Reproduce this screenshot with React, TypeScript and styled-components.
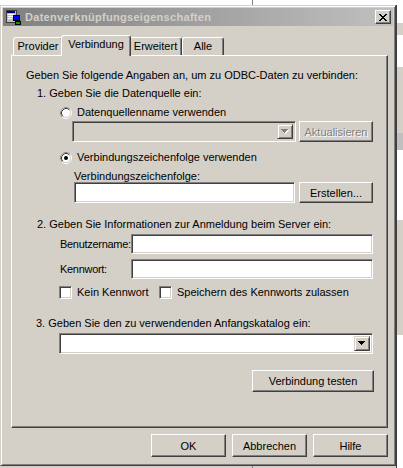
import React from 'react';
import styled, { createGlobalStyle } from 'styled-components';

const face = '#d4d0c8';
const shadow = '#808080';
const dark = '#404040';

const GlobalStyle = createGlobalStyle`
  html, body { margin: 0; padding: 0; }
  body {
    width: 403px;
    height: 468px;
    overflow: hidden;
    background: ${face};
    font-family: "Liberation Sans", Arial, sans-serif;
    font-size: 11px;
    color: #000;
  }
`;

const Desktop = styled.div`
  width: 403px;
  height: 468px;
  box-sizing: border-box;
  display: flex;
  align-items: flex-start;
  padding-top: 5px;
  background: linear-gradient(to right, transparent 252px, #808080 252px 253px, transparent 253px),
    linear-gradient(#fff 0 5px, ${face} 5px);
`;

// strip of the application window behind the dialog
const BackStrip = styled.div`
  flex: 1;
  height: 463px;
  box-sizing: border-box;
  border-left: 1px solid ${dark};
  background: linear-gradient(
    #fff 0 18px,
    ${face} 18px 30px,
    #fff 30px 62px,
    ${face} 62px 128px,
    #c0c0c0 128px 145px,
    #fff 145px 215px,
    ${face} 215px 330px,
    #fff 330px
  );
`;

const Window = styled.div`
  width: 396px;
  height: 461px;
  flex: none;
  box-sizing: border-box;
  border: 1px solid;
  border-color: ${face} ${dark} ${dark} ${face};
  box-shadow: inset 1px 1px #fff, inset -1px -1px ${shadow};
  padding: 2px;
  background: ${face};
  display: flex;
  flex-direction: column;
`;

const TitleBar = styled.div`
  height: 18px;
  flex: none;
  display: flex;
  align-items: center;
  padding: 0 2px;
  background: linear-gradient(to right, #808080, #c0c0c0);
`;

const TitleText = styled.span`
  margin-left: 4px;
  font-weight: bold;
  font-size: 11px;
  letter-spacing: 0.3px;
  color: ${face};
  white-space: nowrap;
`;

const CloseButton = styled.div`
  margin-left: auto;
  width: 16px;
  height: 14px;
  box-sizing: border-box;
  border: 1px solid;
  border-color: #fff ${dark} ${dark} #fff;
  box-shadow: inset -1px -1px ${shadow};
  background: ${face};
  display: flex;
  align-items: center;
  justify-content: center;
  padding-right: 1px;
`;

const Body = styled.div`
  padding: 9px 5px 0 8px;
  display: flex;
  flex-direction: column;
`;

const TabStrip = styled.div`
  height: 20px;
  display: flex;
  align-items: flex-end;
  padding-left: 2px;
`;

const Tab = styled.div<{ $active?: boolean; $w: number }>`
  box-sizing: border-box;
  width: ${(p) => p.$w + (p.$active ? 4 : 0)}px;
  height: ${(p) => (p.$active ? 21 : 18)}px;
  margin: 0 ${(p) => (p.$active ? -2 : 0)}px ${(p) => (p.$active ? -1 : 0)}px;
  padding-top: 2px;
  text-align: center;
  line-height: 13px;
  white-space: nowrap;
  background: ${face};
  border: 1px solid;
  border-bottom: none;
  border-color: #fff ${dark} transparent #fff;
  border-radius: 3px 3px 0 0;
  box-shadow: inset -1px 0 ${shadow};
  position: relative;
  z-index: ${(p) => (p.$active ? 2 : 1)};
`;

const Panel = styled.div`
  width: 377px;
  height: 373px;
  box-sizing: border-box;
  border: 1px solid;
  border-color: #fff ${dark} ${dark} #fff;
  box-shadow: inset -1px -1px ${shadow};
  display: flex;
  flex-direction: column;
`;

const Text = styled.div<{ $mt: number; $ml: number; $h?: number }>`
  height: ${(p) => p.$h ?? 13}px;
  line-height: 13px;
  margin: ${(p) => p.$mt}px 0 0 ${(p) => p.$ml}px;
  white-space: nowrap;
`;

const Row = styled.div<{ $mt: number; $ml: number; $gap?: number }>`
  display: flex;
  align-items: center;
  margin: ${(p) => p.$mt}px 0 0 ${(p) => p.$ml}px;
  gap: ${(p) => p.$gap ?? 0}px;
`;

const Option = styled.label<{ $w?: number }>`
  display: flex;
  align-items: center;
  gap: 5px;
  height: 13px;
  line-height: 13px;
  white-space: nowrap;
  width: ${(p) => (p.$w ? `${p.$w}px` : 'auto')};
`;

const CheckBox = styled.span`
  width: 13px;
  height: 13px;
  box-sizing: border-box;
  flex: none;
  background: #fff;
  border: 1px solid;
  border-color: ${shadow} #fff #fff ${shadow};
  box-shadow: inset 1px 1px ${dark}, inset -1px -1px ${face};
`;

const Edit = styled.div<{ $w: number; $h: number; $disabled?: boolean }>`
  width: ${(p) => p.$w}px;
  height: ${(p) => p.$h}px;
  box-sizing: border-box;
  flex: none;
  background: ${(p) => (p.$disabled ? face : '#fff')};
  border: 1px solid;
  border-color: ${shadow} #fff #fff ${shadow};
  box-shadow: inset 1px 1px ${dark}, inset -1px -1px ${face};
  display: flex;
  justify-content: flex-end;
  align-items: center;
  padding: 2px;
`;

const ArrowButton = styled.div`
  width: 16px;
  height: 100%;
  box-sizing: border-box;
  border: 1px solid;
  border-color: ${face} ${dark} ${dark} ${face};
  box-shadow: inset 1px 1px #fff, inset -1px -1px ${shadow};
  background: ${face};
  display: flex;
  align-items: center;
  justify-content: center;
`;

const Button = styled.div<{ $w: number; $h: number; $disabled?: boolean }>`
  width: ${(p) => p.$w}px;
  height: ${(p) => p.$h}px;
  box-sizing: border-box;
  flex: none;
  background: ${face};
  border: 1px solid;
  border-color: #fff ${dark} ${dark} #fff;
  box-shadow: inset -1px -1px ${shadow};
  display: flex;
  align-items: center;
  justify-content: center;
  white-space: nowrap;
  color: ${(p) => (p.$disabled ? shadow : '#000')};
  text-shadow: ${(p) => (p.$disabled ? '1px 1px #fff' : 'none')};
`;

const FieldLabel = styled.span`
  width: 71px;
  flex: none;
  white-space: nowrap;
  letter-spacing: -0.3px;
`;

const TestRow = styled.div`
  margin: 16px 13px 0 0;
  align-self: flex-end;
`;

const ButtonRow = styled.div`
  display: flex;
  justify-content: flex-end;
  gap: 6px;
  margin-top: 6px;
`;

const AppIcon = () => (
  <svg width="16" height="16" viewBox="0 0 16 16" shapeRendering="crispEdges">
    <rect x="1" y="1" width="10" height="12" fill="#c0c0c0" stroke="#404040" strokeWidth="1" />
    <rect x="2" y="2" width="8" height="2" fill="#000080" />
    <rect x="3" y="5" width="6" height="1" fill="#fff" />
    <rect x="3" y="7" width="6" height="1" fill="#fff" />
    <rect x="3" y="9" width="4" height="1" fill="#fff" />
    <rect x="8" y="6" width="6" height="5" fill="#0000ff" stroke="#000" strokeWidth="1" />
    <rect x="10" y="12" width="5" height="3" fill="#00a000" stroke="#000" strokeWidth="1" />
  </svg>
);

const CloseGlyph = () => (
  <svg width="8" height="7" viewBox="0 0 8 7" shapeRendering="crispEdges" fill="#000">
    <rect x="0" y="0" width="2" height="1" />
    <rect x="6" y="0" width="2" height="1" />
    <rect x="1" y="1" width="2" height="1" />
    <rect x="5" y="1" width="2" height="1" />
    <rect x="2" y="2" width="4" height="1" />
    <rect x="3" y="3" width="2" height="1" />
    <rect x="2" y="4" width="4" height="1" />
    <rect x="1" y="5" width="2" height="1" />
    <rect x="5" y="5" width="2" height="1" />
    <rect x="0" y="6" width="2" height="1" />
    <rect x="6" y="6" width="2" height="1" />
  </svg>
);

const arrowRows = [
  [0, 7],
  [1, 5],
  [2, 3],
  [3, 1],
];

const Arrow = ({ disabled }: { disabled?: boolean }) => (
  <svg width="8" height="5" viewBox="0 0 8 5" shapeRendering="crispEdges">
    {disabled &&
      arrowRows.map(([i, w]) => <rect key={`s${i}`} x={i + 1} y={i + 1} width={w} height="1" fill="#fff" />)}
    {arrowRows.map(([i, w]) => (
      <rect key={i} x={i} y={i} width={w} height="1" fill={disabled ? shadow : '#000'} />
    ))}
  </svg>
);

const Radio = ({ checked }: { checked?: boolean }) => (
  <svg width="12" height="12" viewBox="0 0 12 12" style={{ flex: 'none' }}>
    <circle cx="6" cy="6" r="5.5" fill="none" stroke="#fff" />
    <path d="M2.11 9.89 A5.5 5.5 0 0 1 9.89 2.11" fill="none" stroke={shadow} />
    <circle cx="6" cy="6" r="4.5" fill="#fff" stroke={face} />
    <path d="M2.82 9.18 A4.5 4.5 0 0 1 9.18 2.82" fill="none" stroke={dark} />
    {checked && <circle cx="6" cy="6" r="2" fill="#000" />}
  </svg>
);

const Combo = ({ w, disabled }: { w: number; disabled?: boolean }) => (
  <Edit $w={w} $h={21} $disabled={disabled}>
    <ArrowButton>
      <Arrow disabled={disabled} />
    </ArrowButton>
  </Edit>
);

export default function App() {
  return (
    <>
      <GlobalStyle />
      <Desktop>
        <Window>
          <TitleBar>
            <AppIcon />
            <TitleText>Datenverknüpfungseigenschaften</TitleText>
            <CloseButton>
              <CloseGlyph />
            </CloseButton>
          </TitleBar>
          <Body>
            <TabStrip>
              <Tab $w={50}>Provider</Tab>
              <Tab $w={66} $active>
                Verbindung
              </Tab>
              <Tab $w={53}>Erweitert</Tab>
              <Tab $w={42}>Alle</Tab>
            </TabStrip>
            <Panel>
              <Text $mt={13} $ml={14}>
                Geben Sie folgende Angaben an, um zu ODBC-Daten zu verbinden:
              </Text>
              <Text $mt={5} $ml={25}>
                1. Geben Sie die Datenquelle ein:
              </Text>
              <Row $mt={6} $ml={48}>
                <Option>
                  <Radio />
                  Datenquellenname verwenden
                </Option>
              </Row>
              <Row $mt={2} $ml={60} $gap={3}>
                <Combo w={224} disabled />
                <Button $w={74} $h={21} $disabled>
                  Aktualisieren
                </Button>
              </Row>
              <Row $mt={9} $ml={48}>
                <Option>
                  <Radio checked />
                  Verbindungszeichenfolge verwenden
                </Option>
              </Row>
              <Text $mt={6} $ml={62} $h={12}>
                Verbindungszeichenfolge:
              </Text>
              <Row $mt={0} $ml={62} $gap={4}>
                <Edit $w={221} $h={21} />
                <Button $w={74} $h={21}>
                  Erstellen...
                </Button>
              </Row>
              <Text $mt={15} $ml={25}>
                2. Geben Sie Informationen zur Anmeldung beim Server ein:
              </Text>
              <Row $mt={3} $ml={48}>
                <FieldLabel>Benutzername:</FieldLabel>
                <Edit $w={242} $h={20} />
              </Row>
              <Row $mt={5} $ml={48}>
                <FieldLabel>Kennwort:</FieldLabel>
                <Edit $w={242} $h={20} />
              </Row>
              <Row $mt={7} $ml={47}>
                <Option $w={100}>
                  <CheckBox />
                  Kein Kennwort
                </Option>
                <Option>
                  <CheckBox />
                  Speichern des Kennworts zulassen
                </Option>
              </Row>
              <Text $mt={18} $ml={24}>
                3. Geben Sie den zu verwendenden Anfangskatalog ein:
              </Text>
              <Row $mt={3} $ml={47}>
                <Combo w={314} />
              </Row>
              <TestRow>
                <Button $w={122} $h={22}>
                  Verbindung testen
                </Button>
              </TestRow>
            </Panel>
            <ButtonRow>
              <Button $w={75} $h={23}>
                OK
              </Button>
              <Button $w={75} $h={23}>
                Abbrechen
              </Button>
              <Button $w={75} $h={23}>
                Hilfe
              </Button>
            </ButtonRow>
          </Body>
        </Window>
        <BackStrip />
      </Desktop>
    </>
  );
}
